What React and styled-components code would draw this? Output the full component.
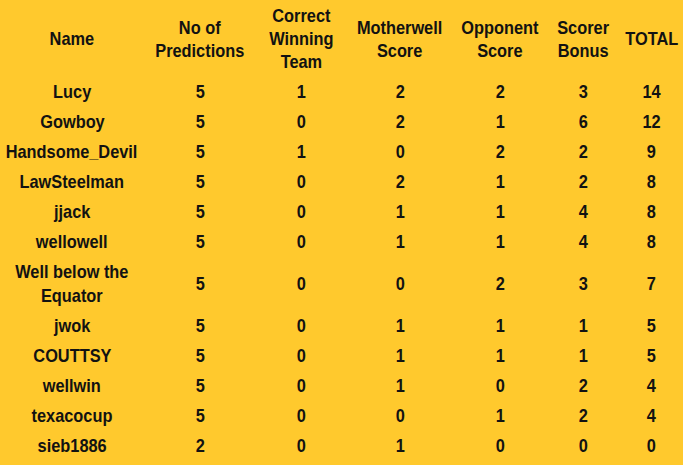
import React from "react";
import styled, { createGlobalStyle } from "styled-components";

const Global = createGlobalStyle`
  html, body { margin: 0; padding: 0; background: #FFC92D; }
  body { font-family: "Liberation Sans", Arial, sans-serif; }
`;

const Table = styled.div`
  display: grid;
  grid-template-columns: 144px 112px 90px 108px 92px 74px 63px;
  width: 683px;
  height: 465px;
  background: #FFC92D;
  color: #121212;
  font-weight: bold;
  font-size: 19px;
  align-content: start;
`;

const Cell = styled.div`
  display: flex;
  align-items: center;
  justify-content: center;
  text-align: center;
  line-height: ${(p) => (p.$head ? "23px" : "24px")};
  padding: ${(p) => (p.$head ? "4px 0" : "3px 0")};
`;

const Text = styled.span`
  display: inline-block;
  white-space: nowrap;
  transform: scaleX(0.86);
  transform-origin: center;
`;

const headerLines = [
  ["Name"],
  ["No of", "Predictions"],
  ["Correct", "Winning", "Team"],
  ["Motherwell", "Score"],
  ["Opponent", "Score"],
  ["Scorer", "Bonus"],
  ["TOTAL"],
];

const rows = [
  [["Lucy"], 5, 1, 2, 2, 3, 14],
  [["Gowboy"], 5, 0, 2, 1, 6, 12],
  [["Handsome_Devil"], 5, 1, 0, 2, 2, 9],
  [["LawSteelman"], 5, 0, 2, 1, 2, 8],
  [["jjack"], 5, 0, 1, 1, 4, 8],
  [["wellowell"], 5, 0, 1, 1, 4, 8],
  [["Well below the", "Equator"], 5, 0, 0, 2, 3, 7],
  [["jwok"], 5, 0, 1, 1, 1, 5],
  [["COUTTSY"], 5, 0, 1, 1, 1, 5],
  [["wellwin"], 5, 0, 1, 0, 2, 4],
  [["texacocup"], 5, 0, 0, 1, 2, 4],
  [["sieb1886"], 2, 0, 1, 0, 0, 0],
];

function Lines({ lines }) {
  return (
    <Text>
      {lines.map((l, i) => (
        <React.Fragment key={i}>
          {i > 0 && <br />}
          {l}
        </React.Fragment>
      ))}
    </Text>
  );
}

export default function App() {
  return (
    <>
      <Global />
      <Table>
        {headerLines.map((h, i) => (
          <Cell $head key={"h" + i}>
            <Lines lines={h} />
          </Cell>
        ))}
        {rows.map((r, ri) =>
          r.map((v, ci) => (
            <Cell key={ri + "-" + ci}>
              <Lines lines={ci === 0 ? v : [String(v)]} />
            </Cell>
          ))
        )}
      </Table>
    </>
  );
}
